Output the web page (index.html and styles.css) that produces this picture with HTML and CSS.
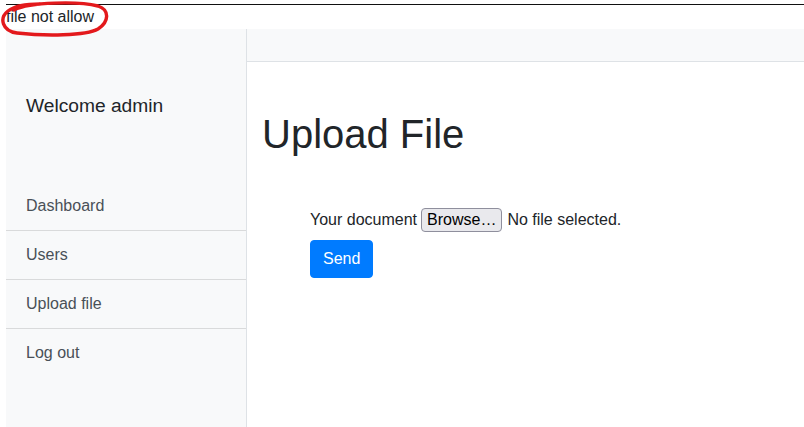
FILE: index.html
```html
<!DOCTYPE html>
<html lang="en">
<head>
<meta charset="utf-8">
<title>Upload File</title>
<link rel="stylesheet" href="styles.css">
</head>
<body>
<div class="page">
  <div class="message">file not allow</div>
  <div class="wrapper">
    <aside class="sidebar">
      <div class="sidebar-heading">Welcome admin</div>
      <nav class="list-group">
        <a class="list-item" href="#">Dashboard</a>
        <a class="list-item" href="#">Users</a>
        <a class="list-item" href="#">Upload file</a>
        <a class="list-item" href="#">Log out</a>
      </nav>
    </aside>
    <main class="main">
      <div class="navbar"></div>
      <div class="container">
        <h1 class="title">Upload File</h1>
        <form class="upload-form">
          <div class="file-row">
            <span class="label">Your document</span>
            <span class="browse">Browse…</span>
            <span class="file-status">No file selected.</span>
          </div>
          <button type="button" class="btn-send">Send</button>
        </form>
      </div>
    </main>
  </div>
</div>
<svg class="annotation" width="112" height="40" viewBox="0 0 112 40" aria-hidden="true">
  <path d="M14 10 C 30 2, 78 1, 98 6 C 110 10, 109 22, 98 29 C 86 36, 44 36, 17 33 C 2 31, -1 18, 8 11 C 16 5, 28 4, 40 4" fill="none" stroke="#e3191c" stroke-width="3.4" stroke-linecap="round"/>
</svg>
</body>
</html>
```
FILE: styles.css
```css
* {
  box-sizing: border-box;
}

html, body {
  margin: 0;
  padding: 0;
  height: 100%;
}

body {
  font-family: "Liberation Sans", Arial, sans-serif;
  font-size: 16px;
  line-height: 24px;
  color: #212529;
  background: #fff;
  position: relative;
  overflow: hidden;
}

.page {
  margin-left: 6px;
  margin-top: 4px;
  border-top: 1px solid #111;
  height: calc(100% - 4px);
  display: flex;
  flex-direction: column;
}

.message {
  height: 24px;
  line-height: 24px;
  color: #212529;
}

.wrapper {
  flex: 1;
  display: flex;
  min-height: 0;
}

.sidebar {
  width: 241px;
  flex: 0 0 241px;
  background: #f8f9fa;
  border-right: 1px solid #dee2e6;
}

.sidebar-heading {
  height: 153px;
  display: flex;
  align-items: center;
  padding: 1px 20px 0;
  font-size: 19.2px;
  color: #212529;
}

.list-group {
  display: flex;
  flex-direction: column;
}

.list-item {
  display: block;
  padding: 12px 20px;
  line-height: 24px;
  color: #495057;
  text-decoration: none;
  background: #f8f9fa;
  border-top: 1px solid #d9dadb;
}

.list-item:first-child {
  border-top: 0;
}

.main {
  flex: 1;
  min-width: 0;
}

.navbar {
  height: 33px;
  background: #f8f9fa;
  border-bottom: 1px solid #dee2e6;
}

.container {
  padding: 0 15px;
}

.title {
  margin: 48px 0 0;
  font-size: 40px;
  line-height: 48px;
  font-weight: 500;
  color: #212529;
}

.upload-form {
  margin-top: 50px;
  padding-left: 48px;
  display: flex;
  flex-direction: column;
  align-items: flex-start;
}

.file-row {
  display: flex;
  align-items: center;
  height: 24px;
}

.label {
  margin-right: 4px;
}

.browse {
  height: 24px;
  line-height: 22px;
  padding: 0 5px;
  border: 1px solid #8f8f9d;
  border-radius: 4px;
  background: #e9e9ed;
  color: #000;
  margin-right: 5px;
}

.file-status {
  color: #212529;
}

.btn-send {
  margin-top: 8px;
  height: 38px;
  padding: 6px 12px;
  font-family: inherit;
  font-size: 16px;
  line-height: 24px;
  color: #fff;
  background: #007bff;
  border: 1px solid #007bff;
  border-radius: 4px;
}

.annotation {
  position: absolute;
  left: 0;
  top: 0;
}
```
